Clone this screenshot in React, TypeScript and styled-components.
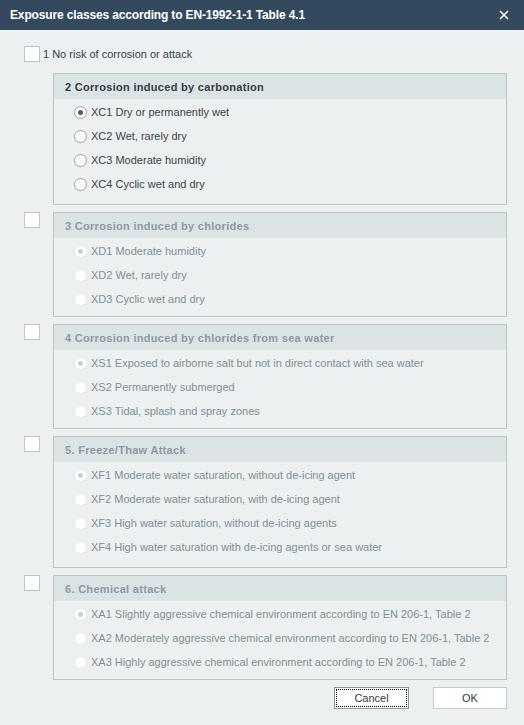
import styled, { createGlobalStyle } from "styled-components";

const GlobalStyle = createGlobalStyle`
  body {
    margin: 0;
    background: #ecf0f1;
    font-family: "Liberation Sans", Arial, sans-serif;
  }
`;

const Window = styled.div`
  width: 524px;
  height: 725px;
  display: flex;
  flex-direction: column;
  background: #ecf0f1;
  overflow: hidden;
`;

const TitleBar = styled.div`
  height: 30px;
  flex: 0 0 30px;
  background: #34495e;
  display: flex;
  align-items: center;
  justify-content: space-between;
  padding: 0 14px 0 10px;
`;

const Title = styled.span`
  color: #ffffff;
  font-weight: 700;
  font-size: 12px;
  letter-spacing: -0.15px;
`;

const CloseButton = styled.button`
  width: 12px;
  height: 12px;
  padding: 0;
  border: none;
  background: transparent;
  display: flex;
  align-items: center;
  justify-content: center;
`;

const Body = styled.div`
  padding: 16px 17px 0 24px;
  display: flex;
  flex-direction: column;
`;

const CheckRow = styled.label`
  display: flex;
  align-items: center;
  gap: 3px;
  height: 16px;
  font-size: 11px;
  color: #3b4248;
`;

const CheckBox = styled.span`
  width: 16px;
  height: 16px;
  flex: 0 0 16px;
  box-sizing: border-box;
  background: #ffffff;
  border: 1px solid #bcc6c9;
`;

const Spacer = styled.span`
  width: 16px;
  flex: 0 0 16px;
`;

const GroupList = styled.div`
  margin-top: 11px;
  display: flex;
  flex-direction: column;
  gap: 7px;
`;

const Section = styled.div`
  display: flex;
  align-items: flex-start;
  gap: 13px;
`;

const GroupBox = styled.div`
  flex: 1;
  border: 1px solid #bcc6c9;
  background: #ecf0f1;
`;

const GroupHeader = styled.div<{ $disabled?: boolean }>`
  height: 25px;
  display: flex;
  align-items: center;
  padding-left: 11px;
  background: #dce3e5;
  font-weight: 700;
  font-size: 11px;
  letter-spacing: 0.3px;
  color: ${(p) => (p.$disabled ? "#8c9ba3" : "#333b42")};
`;

const Options = styled.div<{ $rows: number }>`
  padding: 1px 0 ${(p) => (p.$rows > 3 ? 8 : 5)}px 20px;
  display: flex;
  flex-direction: column;
`;

const OptionRow = styled.label<{ $disabled?: boolean }>`
  height: 24px;
  display: flex;
  align-items: center;
  gap: 4px;
  font-size: 11px;
  color: ${(p) => (p.$disabled ? "#848f95" : "#3b4248")};
`;

const Radio = styled.span<{ $checked?: boolean; $disabled?: boolean }>`
  width: 13px;
  height: 13px;
  flex: 0 0 13px;
  box-sizing: border-box;
  border-radius: 50%;
  background: #ffffff;
  border: 1px solid ${(p) => (p.$disabled ? "#e6eaeb" : "#9a9fa3")};
  display: flex;
  align-items: center;
  justify-content: center;

  &::after {
    content: "";
    width: 5px;
    height: 5px;
    border-radius: 50%;
    display: ${(p) => (p.$checked ? "block" : "none")};
    background: ${(p) => (p.$disabled ? "#c9cfd2" : "#555a5e")};
  }
`;

const Footer = styled.div`
  margin-top: 7px;
  display: flex;
  justify-content: flex-end;
  gap: 24px;
`;

const Button = styled.button<{ $focused?: boolean; $width: number }>`
  width: ${(p) => p.$width}px;
  height: 22px;
  box-sizing: border-box;
  background: #ffffff;
  border: 1px solid ${(p) => (p.$focused ? "#8e9396" : "#c3cacc")};
  font-family: "Liberation Sans", Arial, sans-serif;
  font-size: 11px;
  color: #333b42;
  padding: 0;
  outline: ${(p) => (p.$focused ? "1px dotted #000" : "none")};
  outline-offset: -3px;
`;

type Group = {
  title: string;
  disabled: boolean;
  checkbox: boolean;
  options: string[];
};

const groups: Group[] = [
  {
    title: "2 Corrosion induced by carbonation",
    disabled: false,
    checkbox: false,
    options: [
      "XC1 Dry or permanently wet",
      "XC2 Wet, rarely dry",
      "XC3 Moderate humidity",
      "XC4 Cyclic wet and dry",
    ],
  },
  {
    title: "3 Corrosion induced by chlorides",
    disabled: true,
    checkbox: true,
    options: ["XD1 Moderate humidity", "XD2 Wet, rarely dry", "XD3 Cyclic wet and dry"],
  },
  {
    title: "4 Corrosion induced by chlorides from sea water",
    disabled: true,
    checkbox: true,
    options: [
      "XS1 Exposed to airborne salt but not in direct contact with sea water",
      "XS2 Permanently submerged",
      "XS3 Tidal, splash and spray zones",
    ],
  },
  {
    title: "5. Freeze/Thaw Attack",
    disabled: true,
    checkbox: true,
    options: [
      "XF1 Moderate water saturation, without de-icing agent",
      "XF2 Moderate water saturation, with de-icing agent",
      "XF3 High water saturation, without de-icing agents",
      "XF4 High water saturation with de-icing agents or sea water",
    ],
  },
  {
    title: "6. Chemical attack",
    disabled: true,
    checkbox: true,
    options: [
      "XA1 Slightly aggressive chemical environment according to EN 206-1, Table 2",
      "XA2 Moderately aggressive chemical environment according to EN 206-1, Table 2",
      "XA3 Highly aggressive chemical environment according to EN 206-1, Table 2",
    ],
  },
];

export default function App() {
  return (
    <>
      <GlobalStyle />
      <Window>
        <TitleBar>
          <Title>Exposure classes according to EN-1992-1-1 Table 4.1</Title>
          <CloseButton aria-label="Close">
            <svg width="10" height="10" viewBox="0 0 10 10">
              <path d="M1 1 L9 9 M9 1 L1 9" stroke="#ffffff" strokeWidth="1.6" />
            </svg>
          </CloseButton>
        </TitleBar>
        <Body>
          <CheckRow>
            <CheckBox />
            1 No risk of corrosion or attack
          </CheckRow>
          <GroupList>
            {groups.map((g) => (
              <Section key={g.title}>
                {g.checkbox ? <CheckBox /> : <Spacer />}
                <GroupBox>
                  <GroupHeader $disabled={g.disabled}>{g.title}</GroupHeader>
                  <Options $rows={g.options.length}>
                    {g.options.map((o, i) => (
                      <OptionRow key={o} $disabled={g.disabled}>
                        <Radio $checked={i === 0} $disabled={g.disabled} />
                        {o}
                      </OptionRow>
                    ))}
                  </Options>
                </GroupBox>
              </Section>
            ))}
          </GroupList>
          <Footer>
            <Button $focused $width={75}>Cancel</Button>
            <Button $width={74}>OK</Button>
          </Footer>
        </Body>
      </Window>
    </>
  );
}
